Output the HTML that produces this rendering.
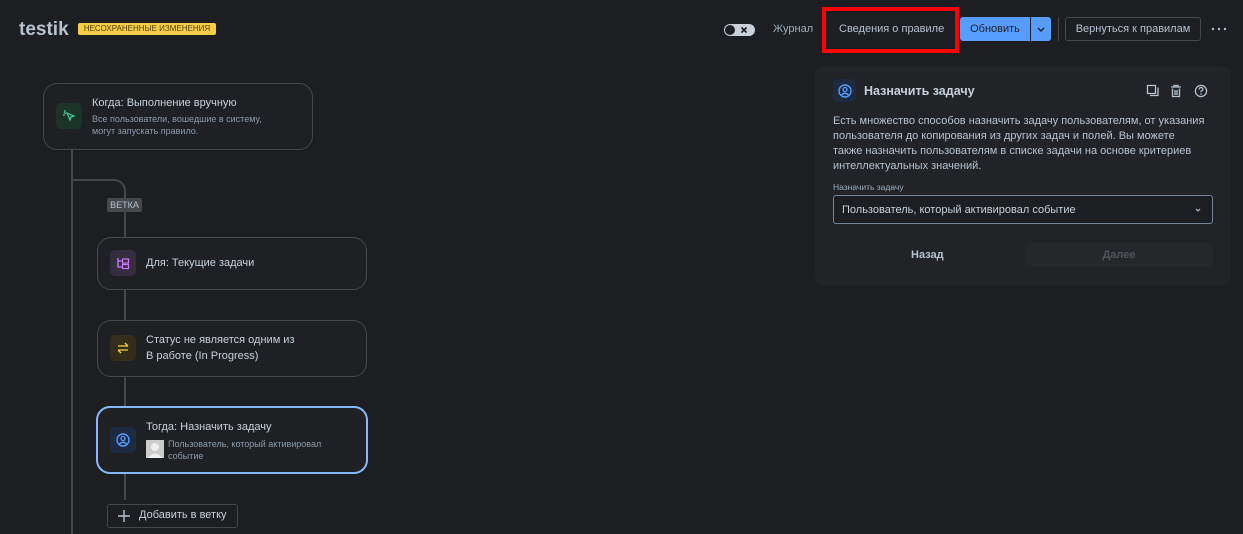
<!DOCTYPE html>
<html><head><meta charset="utf-8"><style>
*{box-sizing:border-box;margin:0;padding:0}
body{width:1243px;height:534px;background:#1d1e21;font-family:"Liberation Sans",sans-serif;color:#b6c2cf;position:relative;overflow:hidden}
.a{position:absolute}
.card{position:absolute;border:1px solid #45474b;border-radius:14px;background:#1f2023}
.ic{position:absolute;width:26px;height:26px;border-radius:5px;display:flex;align-items:center;justify-content:center}
.t{font-size:11.5px;color:#c7d1db;white-space:nowrap}
.s{font-size:9.5px;color:#8c9bab;white-space:nowrap;line-height:12px}
.line{position:absolute;background:#45474b;width:2px}
</style></head><body>
<div class="a" style="left:19px;top:19px;font-size:19px;font-weight:bold;color:#b6c2cf">testik</div>
<div class="a" style="left:78px;top:23px;width:138px;height:12px;background:#f5cd47;border-radius:2px;font-size:8px;color:#533f04;line-height:12px;text-align:center">НЕСОХРАНЕННЫЕ ИЗМЕНЕНИЯ</div>

<div class="a" style="left:724px;top:24px;width:31px;height:12px;border-radius:6px;background:#c7d1db"></div>
<div class="a" style="left:725px;top:25px;width:10px;height:10px;border-radius:5px;background:#1d1e21"></div>
<svg class="a" style="left:740px;top:26px" width="8" height="8"><path d="M1.5 1.5l5 5M6.5 1.5l-5 5" stroke="#1d1e21" stroke-width="1.6"/></svg>
<div class="a t" style="left:773px;top:23px;font-size:11px;color:#9fadbc">Журнал</div>
<div class="a" style="left:822px;top:7px;width:137px;height:46px;border:4px solid #ff0000"></div>
<div class="a t" style="left:839px;top:23px;font-size:11px;color:#b6c2cf">Сведения о правиле</div>
<div class="a" style="left:960px;top:17px;width:70px;height:24px;background:#579dff;border-radius:3px 0 0 3px;font-size:11px;color:#1d2125;text-align:center;line-height:24px">Обновить</div>
<div class="a" style="left:1031px;top:17px;width:20px;height:24px;background:#579dff;border-radius:0 3px 3px 0"></div>
<svg class="a" style="left:1035px;top:24px" width="12" height="10"><path d="M3 4l3 3 3-3" stroke="#1d2125" stroke-width="1.5" fill="none"/></svg>
<div class="a" style="left:1058px;top:17px;width:1px;height:24px;background:#45474b"></div>
<div class="a" style="left:1065px;top:17px;width:136px;height:24px;border:1px solid #45474b;border-radius:3px;font-size:11px;color:#b6c2cf;text-align:center;line-height:22px">Вернуться к правилам</div>
<svg class="a" style="left:1211px;top:27px" width="16" height="4"><circle cx="2" cy="2" r="1.2" fill="#b6c2cf"/><circle cx="8" cy="2" r="1.2" fill="#b6c2cf"/><circle cx="14" cy="2" r="1.2" fill="#b6c2cf"/></svg>

<div class="a" style="left:815px;top:66px;width:416px;height:219px;background:#222326;border-radius:8px"></div>
<div class="ic" style="left:833px;top:79px;width:23px;height:23px;background:#1c2b41"><svg width="14" height="14"><circle cx="7" cy="7" r="6" stroke="#579dff" stroke-width="1.4" fill="none"/><circle cx="7" cy="5.5" r="2" stroke="#579dff" stroke-width="1.3" fill="none"/><path d="M3.5 11q3.5-3.5 7 0" stroke="#579dff" stroke-width="1.3" fill="none"/></svg></div>
<div class="a" style="left:864px;top:84px;font-size:12.5px;font-weight:bold;color:#c7d1db">Назначить задачу</div>
<svg class="a" style="left:1146px;top:84px" width="64" height="14"><rect x="1.5" y="1.5" width="8" height="8" stroke="#b6c2cf" stroke-width="1.3" fill="none"/><path d="M4 11.5h8v-8" stroke="#b6c2cf" stroke-width="1.3" fill="none"/><path d="M25 3h10M28 3v-1.5h4V3M26.5 4.5v8h7v-8M29 6v5M31 6v5" stroke="#b6c2cf" stroke-width="1.3" fill="none"/><circle cx="55" cy="7" r="5.6" stroke="#b6c2cf" stroke-width="1.3" fill="none"/><path d="M53.2 5.5q0-2 1.8-2t1.8 1.8q0 1.2-1.8 2v1" stroke="#b6c2cf" stroke-width="1.2" fill="none"/><circle cx="55" cy="10" r=".8" fill="#b6c2cf"/></svg>
<div class="a" style="left:833px;top:114px;font-size:11px;line-height:15px;color:#b6c2cf;width:385px">Есть множество способов назначить задачу пользователям, от указания пользователя до копирования из других задач и полей. Вы можете<br>также назначить пользователям в списке задачи на основе критериев интеллектуальных значений.</div>
<div class="a" style="left:833px;top:182px;font-size:8.5px;color:#9fadbc">Назначить задачу</div>
<div class="a" style="left:833px;top:195px;width:380px;height:29px;border:1px solid #738496;border-radius:3px;background:#1d1e21;font-size:11px;color:#c7d1db;padding-left:8px;line-height:28px">Пользователь, который активировал событие</div>
<svg class="a" style="left:1193px;top:206px" width="10" height="8"><path d="M3 3l2 2 2-2" stroke="#9fadbc" stroke-width="1.3" fill="none"/></svg>
<div class="a" style="left:911px;top:249px;font-size:11px;font-weight:bold;color:#b6c2cf">Назад</div>
<div class="a" style="left:1025px;top:243px;width:188px;height:24px;background:#26272a;border-radius:3px;font-size:11px;font-weight:bold;color:#4f5559;text-align:center;line-height:25px">Далее</div>

<div class="line" style="left:71px;top:149px;height:385px"></div>
<div class="a" style="left:72px;top:179px;width:54px;height:30px;border-top:2px solid #45474b;border-right:2px solid #45474b;border-top-right-radius:12px"></div>
<div class="line" style="left:124px;top:200px;height:300px"></div>
<div class="a" style="left:107px;top:198px;width:35px;height:14px;background:#45474b;border-radius:2px;font-size:9px;color:#b6c2cf;text-align:center;line-height:14px">ВЕТКА</div>

<div class="card" style="left:43px;top:83px;width:270px;height:67px"></div>
<div class="ic" style="left:56px;top:103px;background:#1c3329"><svg width="14" height="14"><path d="M5 4l7 3-3 1-1 3z M2 3l2 2M1 6h2M3 1v2" stroke="#4bce97" stroke-width="1.2" fill="none"/></svg></div>
<div class="a t" style="left:92px;top:97px;font-size:11px">Когда: Выполнение вручную</div>
<div class="a s" style="left:92px;top:113px;font-size:9px">Все пользователи, вошедшие в систему,<br>могут запускать правило.</div>

<div class="card" style="left:97px;top:237px;width:270px;height:53px"></div>
<div class="ic" style="left:110px;top:250px;background:#352c3f"><svg width="14" height="14"><path d="M2 2v9h4M2 5h4" stroke="#c97cf4" stroke-width="1.3" fill="none"/><rect x="6.5" y="3" width="6" height="4" stroke="#c97cf4" stroke-width="1.2" fill="none"/><rect x="6.5" y="8.5" width="6" height="4" stroke="#c97cf4" stroke-width="1.2" fill="none"/></svg></div>
<div class="a t" style="left:146px;top:257px;font-size:11px">Для: Текущие задачи</div>

<div class="card" style="left:97px;top:320px;width:270px;height:57px"></div>
<div class="ic" style="left:110px;top:335px;background:#332e1b"><svg width="14" height="14"><path d="M2 5h10M9 2l3 3M12 9H2M5 12L2 9" stroke="#f5cd47" stroke-width="1.3" fill="none"/></svg></div>
<div class="a t" style="left:146px;top:334px;font-size:11px">Статус не является одним из</div>
<div class="a t" style="left:146px;top:350px;font-size:11px">В работе (In Progress)</div>

<div class="a" style="left:96px;top:406px;width:272px;height:68px;border:2px solid #85b8ff;border-radius:14px;background:#1f2023"></div>
<div class="ic" style="left:110px;top:427px;background:#1c2b41"><svg width="14" height="14"><circle cx="7" cy="7" r="6" stroke="#579dff" stroke-width="1.4" fill="none"/><circle cx="7" cy="5.5" r="2" stroke="#579dff" stroke-width="1.3" fill="none"/><path d="M3.5 11q3.5-3.5 7 0" stroke="#579dff" stroke-width="1.3" fill="none"/></svg></div>
<div class="a t" style="left:146px;top:421px;font-size:11px">Тогда: Назначить задачу</div>
<div class="a" style="left:146px;top:440px;width:18px;height:18px;background:#ccc"><svg width="18" height="18"><circle cx="9" cy="7" r="4" fill="#eee"/><path d="M2 18q7-9 14 0z" fill="#eee"/></svg></div>
<div class="a s" style="left:168px;top:438px;font-size:9px">Пользователь, который активировал<br>событие</div>

<div class="a" style="left:107px;top:504px;width:131px;height:24px;border:1px solid #45474b;border-radius:3px;background:#1d1e21"></div>
<svg class="a" style="left:118px;top:510px" width="12" height="12"><path d="M6 0v12M0 6h12" stroke="#b6c2cf" stroke-width="1.4"/></svg>
<div class="a t" style="left:139px;top:509px;font-size:11px;color:#c7d1db">Добавить в ветку</div>
</body></html>
